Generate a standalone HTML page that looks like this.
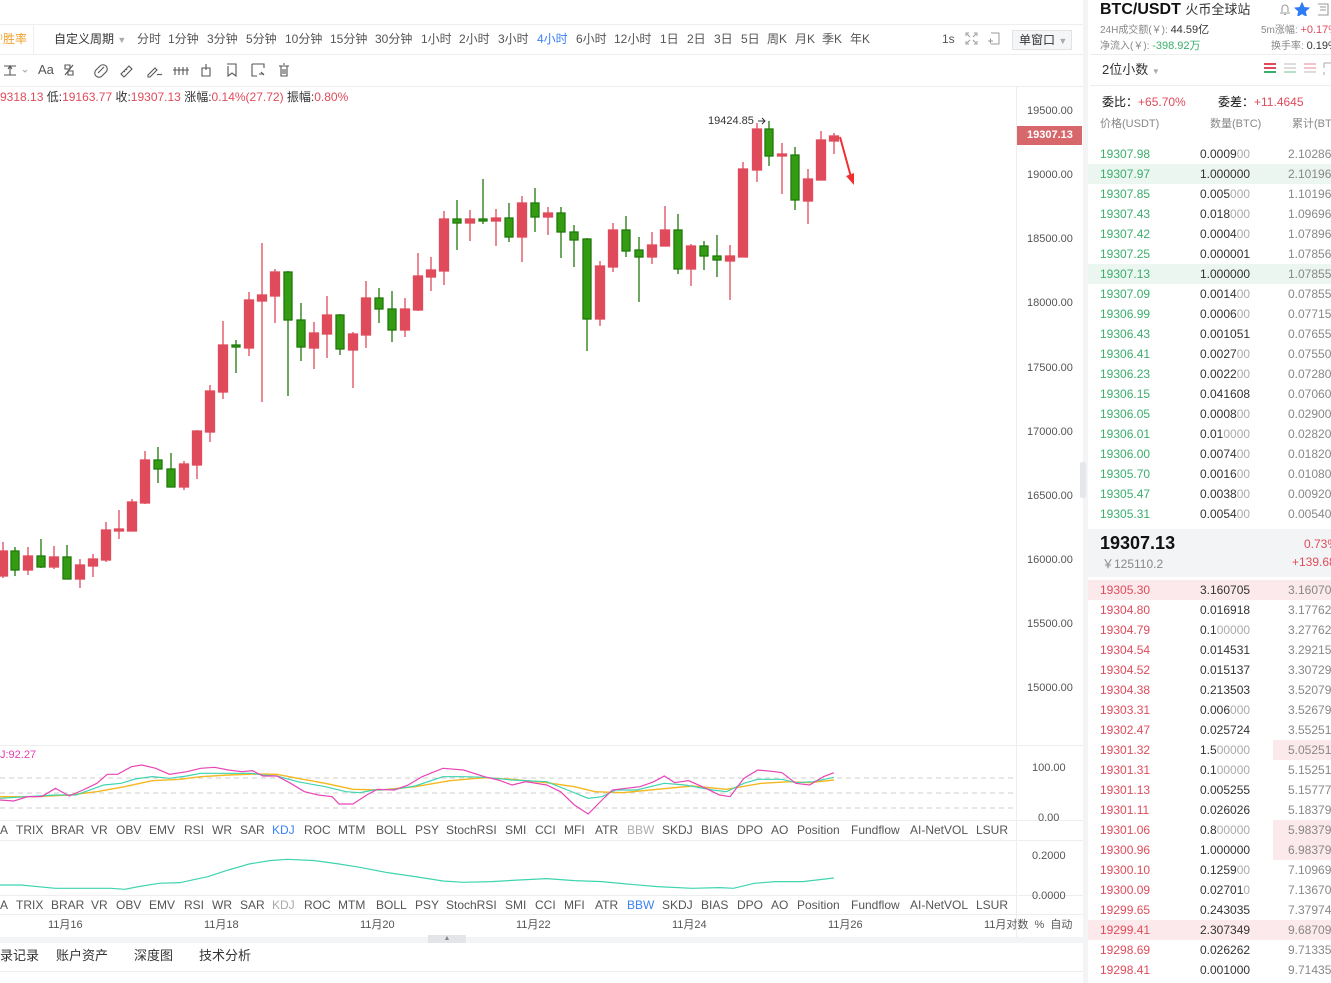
<!DOCTYPE html>
<html><head><meta charset="utf-8">
<style>
*{margin:0;padding:0;box-sizing:border-box}
html,body{width:1331px;height:983px;overflow:hidden}
body{background:#fff;font-family:"Liberation Sans","Noto Sans CJK SC",sans-serif;font-size:12px;color:#333;position:relative}
.a{position:absolute;white-space:nowrap;line-height:14px}
.t{position:absolute;white-space:nowrap;font-size:12px;color:#555;line-height:14px}
.rp{position:absolute;left:1088px;top:0;width:243px;height:983px;background:#fff;overflow:hidden}
.row{position:absolute;left:0;width:243px;height:20px;font-size:12px;line-height:20px}
.row span{position:absolute}
.p{left:12px}.q{left:112px;color:#333}.c{left:200px;color:#888}
.gz{color:#aaa;font-style:normal}
.gr{color:#3aae6c}.rd{color:#e04b5b}
</style></head><body>

<div class="a" style="left:0;top:24px;width:1083px;height:1px;background:#eee"></div>
<div class="a" style="left:0;top:54px;width:1083px;height:1px;background:#eee"></div>
<div class="a" style="left:0;top:86px;width:1083px;height:1px;background:#eee"></div>
<div class="a" style="left:33px;top:25px;width:1px;height:29px;background:#eee"></div>
<div class="a" style="left:0;top:32px;color:#f2a12a;font-size:12px">⁾胜率</div>
<div class="t" style="top:32px;left:54px;color:#333">自定义周期 <span style="color:#aaa;font-size:9px">▼</span></div>
<div class="t" style="top:32px;left:137px">分时</div>
<div class="t" style="top:32px;left:168px">1分钟</div>
<div class="t" style="top:32px;left:207px">3分钟</div>
<div class="t" style="top:32px;left:246px">5分钟</div>
<div class="t" style="top:32px;left:285px">10分钟</div>
<div class="t" style="top:32px;left:330px">15分钟</div>
<div class="t" style="top:32px;left:375px">30分钟</div>
<div class="t" style="top:32px;left:421px">1小时</div>
<div class="t" style="top:32px;left:459px">2小时</div>
<div class="t" style="top:32px;left:498px">3小时</div>
<div class="t" style="top:32px;left:537px;color:#3b82f6">4小时</div>
<div class="t" style="top:32px;left:576px">6小时</div>
<div class="t" style="top:32px;left:614px">12小时</div>
<div class="t" style="top:32px;left:660px">1日</div>
<div class="t" style="top:32px;left:687px">2日</div>
<div class="t" style="top:32px;left:714px">3日</div>
<div class="t" style="top:32px;left:741px">5日</div>
<div class="t" style="top:32px;left:767px">周K</div>
<div class="t" style="top:32px;left:795px">月K</div>
<div class="t" style="top:32px;left:822px">季K</div>
<div class="t" style="top:32px;left:850px">年K</div>
<div class="t" style="top:32px;left:942px">1s</div>
<svg class="a" style="left:965px;top:32px" width="13" height="13" viewBox="0 0 13 13" fill="none" stroke="#999" stroke-width="1"><path d="M1 4V1h3M9 1h3v3M12 9v3H9M4 12H1V9M2 2l3 3M11 2 8 5M11 11 8 8M2 11l3-3"/></svg>
<svg class="a" style="left:987px;top:32px" width="13" height="13" viewBox="0 0 13 13" fill="none" stroke="#999" stroke-width="1"><path d="M4 1h8v11H4M1 9h5M3.5 6.5v5"/></svg>
<div class="a" style="left:1012px;top:30px;width:60px;height:20px;border:1px solid #e3e3e3;background:#f5f6f8;font-size:12px;line-height:18px;padding-left:6px">单窗口 <span style="color:#aaa;font-size:9px">▼</span></div>

<svg class="a" style="left:2px;top:62px" width="300" height="16" viewBox="0 0 300 16" fill="none" stroke="#555" stroke-width="1.1">
<path d="M2 13h12M2 4h12M8 4v9M6 7l2-3 2 3"/><path d="M21 8l2 2 2-2" stroke="#aaa"/>
<path d="M63 3h5v4h-5zM66 9h5v4h-5zM63 13l8-10"/>
<path d="M98 4a4 4 0 0 1 6 6l-4 4a4 4 0 0 1-6-6zM96 11l6-6"/>
<path d="M119 12l8-8 3 3-8 8zM122 9l1 1M124 7l1 1"/>
<path d="M146 13l7-7 2 2-7 7h-2zM155 13c2-2 3 1 5-1"/>
<path d="M173 5v8M177 5v8M181 5v8M185 5v8M171 8h16" />
<path d="M200 6h8v8h-8zM204 2v6"/>
<path d="M225 2h9v12l-4-3-4 3V4"/>
<path d="M250 2h12v4M250 2v12h5M259 10l3 3M257 12h5"/>
<path d="M277 4h10M279 4v10h6V4M281 2h2M281 7v5M283 7v5"/>
</svg>
<div class="a" style="left:38px;top:63px;font-size:13px;color:#555">Aa</div>

<div class="a" style="left:0;top:90px;font-size:12px;color:#333"><span class="rd">9318.13</span> 低:<span class="rd">19163.77</span> 收:<span class="rd">19307.13</span> 涨幅:<span class="rd">0.14%(27.72)</span> 振幅:<span class="rd">0.80%</span></div>

<div class="a" style="left:1016px;top:87px;width:1px;height:850px;background:#eee"></div>
<div class="a" style="left:0;top:745px;width:1083px;height:1px;background:#eee"></div>
<div class="a" style="left:0;top:820px;width:1083px;height:1px;background:#eee"></div>
<div class="a" style="left:0;top:840px;width:1083px;height:1px;background:#eee"></div>
<div class="a" style="left:0;top:895px;width:1083px;height:1px;background:#eee"></div>
<div class="a" style="left:0;top:914px;width:1083px;height:1px;background:#eee"></div>

<div class="a" style="left:1027px;top:104px;font-size:11px;color:#555">19500.00</div>
<div class="a" style="left:1027px;top:168px;font-size:11px;color:#555">19000.00</div>
<div class="a" style="left:1027px;top:232px;font-size:11px;color:#555">18500.00</div>
<div class="a" style="left:1027px;top:296px;font-size:11px;color:#555">18000.00</div>
<div class="a" style="left:1027px;top:361px;font-size:11px;color:#555">17500.00</div>
<div class="a" style="left:1027px;top:425px;font-size:11px;color:#555">17000.00</div>
<div class="a" style="left:1027px;top:489px;font-size:11px;color:#555">16500.00</div>
<div class="a" style="left:1027px;top:553px;font-size:11px;color:#555">16000.00</div>
<div class="a" style="left:1027px;top:617px;font-size:11px;color:#555">15500.00</div>
<div class="a" style="left:1027px;top:681px;font-size:11px;color:#555">15000.00</div>
<div class="a" style="left:1017px;top:126px;width:65px;height:19px;background:#d6686b;color:#fff;font-weight:bold;font-size:11px;line-height:19px;padding-left:10px">19307.13</div>
<div class="a" style="left:1032px;top:761px;font-size:11px;color:#555">100.00</div>
<div class="a" style="left:1038px;top:811px;font-size:11px;color:#555">0.00</div>
<div class="a" style="left:1032px;top:849px;font-size:11px;color:#555">0.2000</div>
<div class="a" style="left:1032px;top:889px;font-size:11px;color:#555">0.0000</div>

<svg class="a" style="left:0;top:0" width="1016" height="745">
<style>.r{fill:#e04b5b;stroke:#e04b5b}.g{fill:#339c12;stroke:#1f7a0a}</style>
<g stroke-width="1.3">
<line class="r" x1="3" x2="3" y1="542" y2="578"/><rect class="r" x="-1.5" y="551" width="9" height="25"/>
<line class="g" x1="15" x2="15" y1="547" y2="576"/><rect class="g" x="11" y="551" width="8" height="19"/>
<line class="r" x1="28" x2="28" y1="547" y2="575"/><rect class="r" x="23.5" y="556" width="9" height="14"/>
<line class="g" x1="41" x2="41" y1="539" y2="568"/><rect class="g" x="37" y="556" width="8" height="11"/>
<line class="r" x1="54" x2="54" y1="546" y2="569"/><rect class="r" x="49.5" y="557" width="9" height="10"/>
<line class="g" x1="67" x2="67" y1="545" y2="579"/><rect class="g" x="63" y="557" width="8" height="22"/>
<line class="r" x1="80" x2="80" y1="559" y2="588"/><rect class="r" x="75.5" y="565" width="9" height="14"/>
<line class="r" x1="93" x2="93" y1="554" y2="577"/><rect class="r" x="88.5" y="559" width="9" height="7"/>
<line class="r" x1="106" x2="106" y1="522" y2="562"/><rect class="r" x="101.5" y="530" width="9" height="30"/>
<line class="r" x1="119" x2="119" y1="510" y2="539"/><rect class="r" x="114.5" y="529" width="9" height="2"/>
<line class="r" x1="132" x2="132" y1="499" y2="531"/><rect class="r" x="127.5" y="502" width="9" height="29"/>
<line class="r" x1="145" x2="145" y1="451" y2="504"/><rect class="r" x="140.5" y="460" width="9" height="43"/>
<line class="g" x1="158" x2="158" y1="447" y2="483"/><rect class="g" x="154" y="460" width="8" height="9"/>
<line class="g" x1="171" x2="171" y1="453" y2="487"/><rect class="g" x="167" y="469" width="8" height="18"/>
<line class="r" x1="184" x2="184" y1="461" y2="490"/><rect class="r" x="179.5" y="464" width="9" height="23"/>
<line class="r" x1="197" x2="197" y1="430" y2="479"/><rect class="r" x="192.5" y="431" width="9" height="34"/>
<line class="r" x1="210" x2="210" y1="385" y2="442"/><rect class="r" x="205.5" y="391" width="9" height="41"/>
<line class="r" x1="223" x2="223" y1="321" y2="399"/><rect class="r" x="218.5" y="345" width="9" height="47"/>
<line class="g" x1="236" x2="236" y1="340" y2="373"/><rect class="g" x="232" y="345" width="8" height="2"/>
<line class="r" x1="249" x2="249" y1="292" y2="356"/><rect class="r" x="244.5" y="300" width="9" height="48"/>
<line class="r" x1="262" x2="262" y1="243" y2="402"/><rect class="r" x="257.5" y="295" width="9" height="6"/>
<line class="r" x1="275" x2="275" y1="269" y2="323"/><rect class="r" x="270.5" y="272" width="9" height="24"/>
<line class="g" x1="288" x2="288" y1="271" y2="396"/><rect class="g" x="284" y="272" width="8" height="48"/>
<line class="g" x1="301" x2="301" y1="303" y2="361"/><rect class="g" x="297" y="320" width="8" height="27"/>
<line class="r" x1="314" x2="314" y1="322" y2="369"/><rect class="r" x="309.5" y="333" width="9" height="15"/>
<line class="r" x1="327" x2="327" y1="296" y2="358"/><rect class="r" x="322.5" y="315" width="9" height="19"/>
<line class="g" x1="340" x2="340" y1="314" y2="355"/><rect class="g" x="336" y="315" width="8" height="34"/>
<line class="r" x1="353" x2="353" y1="332" y2="388"/><rect class="r" x="348.5" y="334" width="9" height="16"/>
<line class="r" x1="366" x2="366" y1="281" y2="348"/><rect class="r" x="361.5" y="298" width="9" height="37"/>
<line class="g" x1="379" x2="379" y1="288" y2="323"/><rect class="g" x="375" y="298" width="8" height="11"/>
<line class="g" x1="392" x2="392" y1="291" y2="342"/><rect class="g" x="388" y="309" width="8" height="21"/>
<line class="r" x1="405" x2="405" y1="298" y2="337"/><rect class="r" x="400.5" y="309" width="9" height="21"/>
<line class="r" x1="418" x2="418" y1="253" y2="311"/><rect class="r" x="413.5" y="276" width="9" height="34"/>
<line class="r" x1="431" x2="431" y1="257" y2="291"/><rect class="r" x="426.5" y="270" width="9" height="7"/>
<line class="r" x1="444" x2="444" y1="211" y2="285"/><rect class="r" x="439.5" y="219" width="9" height="52"/>
<line class="g" x1="457" x2="457" y1="200" y2="250"/><rect class="g" x="453" y="219" width="8" height="4"/>
<line class="r" x1="470" x2="470" y1="210" y2="241"/><rect class="r" x="465.5" y="219" width="9" height="4"/>
<line class="g" x1="483" x2="483" y1="179" y2="224"/><rect class="g" x="479" y="219" width="8" height="2"/>
<line class="r" x1="496" x2="496" y1="209" y2="246"/><rect class="r" x="491.5" y="218" width="9" height="3"/>
<line class="g" x1="509" x2="509" y1="203" y2="242"/><rect class="g" x="505" y="218" width="8" height="19"/>
<line class="r" x1="522" x2="522" y1="196" y2="262"/><rect class="r" x="517.5" y="203" width="9" height="34"/>
<line class="g" x1="535" x2="535" y1="188" y2="232"/><rect class="g" x="531" y="203" width="8" height="14"/>
<line class="r" x1="548" x2="548" y1="207" y2="235"/><rect class="r" x="543.5" y="213" width="9" height="4"/>
<line class="g" x1="561" x2="561" y1="207" y2="258"/><rect class="g" x="557" y="213" width="8" height="19"/>
<line class="g" x1="574" x2="574" y1="225" y2="267"/><rect class="g" x="570" y="232" width="8" height="8"/>
<line class="g" x1="587" x2="587" y1="238" y2="351"/><rect class="g" x="583" y="239" width="8" height="80"/>
<line class="r" x1="600" x2="600" y1="261" y2="326"/><rect class="r" x="595.5" y="266" width="9" height="53"/>
<line class="r" x1="613" x2="613" y1="223" y2="272"/><rect class="r" x="608.5" y="230" width="9" height="37"/>
<line class="g" x1="626" x2="626" y1="216" y2="257"/><rect class="g" x="622" y="230" width="8" height="21"/>
<line class="g" x1="639" x2="639" y1="237" y2="302"/><rect class="g" x="635" y="250" width="8" height="7"/>
<line class="r" x1="652" x2="652" y1="232" y2="264"/><rect class="r" x="647.5" y="245" width="9" height="12"/>
<line class="r" x1="665" x2="665" y1="206" y2="246"/><rect class="r" x="660.5" y="230" width="9" height="16"/>
<line class="g" x1="678" x2="678" y1="214" y2="274"/><rect class="g" x="674" y="230" width="8" height="39"/>
<line class="r" x1="691" x2="691" y1="244" y2="286"/><rect class="r" x="686.5" y="246" width="9" height="23"/>
<line class="g" x1="704" x2="704" y1="241" y2="270"/><rect class="g" x="700" y="246" width="8" height="10"/>
<line class="g" x1="717" x2="717" y1="235" y2="277"/><rect class="g" x="713" y="256" width="8" height="4"/>
<line class="r" x1="730" x2="730" y1="245" y2="300"/><rect class="r" x="725.5" y="256" width="9" height="5"/>
<line class="r" x1="743" x2="743" y1="162" y2="257"/><rect class="r" x="738.5" y="169" width="9" height="88"/>
<line class="r" x1="757" x2="757" y1="123" y2="182"/><rect class="r" x="752.5" y="129" width="9" height="41"/>
<line class="g" x1="769" x2="769" y1="121" y2="166"/><rect class="g" x="765" y="129" width="8" height="27"/>
<line class="r" x1="782" x2="782" y1="143" y2="194"/><rect class="r" x="777.5" y="154" width="9" height="2"/>
<line class="g" x1="795" x2="795" y1="147" y2="210"/><rect class="g" x="791" y="155" width="8" height="45"/>
<line class="r" x1="808" x2="808" y1="169" y2="224"/><rect class="r" x="803.5" y="179" width="9" height="22"/>
<line class="r" x1="821" x2="821" y1="131" y2="180"/><rect class="r" x="816.5" y="140" width="9" height="40"/>
<line class="r" x1="834" x2="834" y1="133" y2="154"/><rect class="r" x="829.5" y="136" width="9" height="5"/>
</g>
<text x="708" y="124" font-size="11" fill="#333" font-family="Liberation Sans">19424.85</text>
<path d="M758 121h7M762 118l3 3-3 3" stroke="#333" fill="none" stroke-width="1"/>
<path d="M840 137l11 40" stroke="#f03030" stroke-width="2"/><path d="M846 176l8 9 0-12z" fill="#f03030"/>
</svg>

<div class="a" style="left:0;top:748px;font-size:11px;color:#e040b0">J:92.27</div>
<svg class="a" style="left:0;top:740px" width="1016" height="170">
<g stroke="#ccc" stroke-dasharray="5,4" stroke-width="1"><line x1="0" x2="1016" y1="38" y2="38"/><line x1="0" x2="1016" y1="53" y2="53"/><line x1="0" x2="1016" y1="68" y2="68"/></g>
<g fill="none" stroke-width="1.3" transform="scale(0.692,0.3333)" vector-effect="non-scaling-stroke">
<polyline vector-effect="non-scaling-stroke" stroke="#f5b820" stroke-width="1.4" points="0,170 50,170 100,165 140,155 180,140 220,122 260,118 290,110 330,105 370,102 400,103 430,115 470,130 510,148 550,150 600,140 650,122 700,113 740,118 790,128 830,140 860,155 900,158 950,148 1000,138 1050,148 1100,130 1140,125 1170,128 1205,120"/>
<polyline vector-effect="non-scaling-stroke" stroke="#3fd4b0" stroke-width="1.2" points="0,175 40,170 80,165 110,165 130,150 150,135 175,130 195,117 220,110 245,115 270,108 290,100 310,100 340,100 365,100 380,105 400,108 430,125 470,140 500,155 520,158 540,150 570,148 600,138 640,110 670,110 700,112 740,120 790,125 820,150 850,175 870,170 890,150 920,150 960,130 990,135 1030,150 1050,155 1075,130 1095,118 1130,118 1150,128 1175,125 1205,112"/>
<polyline vector-effect="non-scaling-stroke" stroke="#e845b8" stroke-width="1.2" points="0,180 20,183 40,170 60,170 80,145 100,168 120,150 140,130 155,103 170,103 190,80 205,75 225,85 245,103 270,95 290,85 310,82 330,90 350,95 365,92 380,108 400,108 420,130 440,155 460,165 480,170 490,192 510,192 530,165 545,148 570,150 590,135 610,110 640,85 670,90 700,110 720,120 740,135 760,125 790,135 810,155 830,195 850,222 870,180 885,150 905,145 925,140 945,125 960,108 975,128 995,122 1015,140 1040,165 1055,170 1075,115 1095,90 1120,95 1130,98 1150,130 1170,135 1190,110 1205,98"/>
<polyline vector-effect="non-scaling-stroke" stroke="#3fd4b0" stroke-width="1.2" points="0,435 30,435 80,445 120,445 160,445 180,448 200,440 230,430 260,428 300,410 330,390 360,372 390,362 415,358 455,362 490,372 520,382 560,398 600,410 640,423 670,427 710,425 750,420 790,416 830,422 870,425 900,431 950,440 1000,445 1040,443 1060,445 1090,430 1120,425 1160,425 1205,414"/>
</g>
</svg>

<div class="t" style="top:823px;left:0">A</div><div class="t" style="top:823px;left:16px">TRIX</div><div class="t" style="top:823px;left:51px">BRAR</div><div class="t" style="top:823px;left:91px">VR</div><div class="t" style="top:823px;left:116px">OBV</div><div class="t" style="top:823px;left:149px">EMV</div><div class="t" style="top:823px;left:184px">RSI</div><div class="t" style="top:823px;left:212px">WR</div><div class="t" style="top:823px;left:240px">SAR</div><div class="t" style="top:823px;left:272px;color:#3b82f6">KDJ</div><div class="t" style="top:823px;left:304px">ROC</div><div class="t" style="top:823px;left:338px">MTM</div><div class="t" style="top:823px;left:376px">BOLL</div><div class="t" style="top:823px;left:415px">PSY</div><div class="t" style="top:823px;left:446px">StochRSI</div><div class="t" style="top:823px;left:505px">SMI</div><div class="t" style="top:823px;left:535px">CCI</div><div class="t" style="top:823px;left:564px">MFI</div><div class="t" style="top:823px;left:595px">ATR</div><div class="t" style="top:823px;left:627px;color:#aaa">BBW</div><div class="t" style="top:823px;left:662px">SKDJ</div><div class="t" style="top:823px;left:701px">BIAS</div><div class="t" style="top:823px;left:737px">DPO</div><div class="t" style="top:823px;left:771px">AO</div><div class="t" style="top:823px;left:797px">Position</div><div class="t" style="top:823px;left:851px">Fundflow</div><div class="t" style="top:823px;left:910px">AI-NetVOL</div><div class="t" style="top:823px;left:976px">LSUR</div>

<div class="t" style="top:898px;left:0">A</div><div class="t" style="top:898px;left:16px">TRIX</div><div class="t" style="top:898px;left:51px">BRAR</div><div class="t" style="top:898px;left:91px">VR</div><div class="t" style="top:898px;left:116px">OBV</div><div class="t" style="top:898px;left:149px">EMV</div><div class="t" style="top:898px;left:184px">RSI</div><div class="t" style="top:898px;left:212px">WR</div><div class="t" style="top:898px;left:240px">SAR</div><div class="t" style="top:898px;left:272px;color:#aaa">KDJ</div><div class="t" style="top:898px;left:304px">ROC</div><div class="t" style="top:898px;left:338px">MTM</div><div class="t" style="top:898px;left:376px">BOLL</div><div class="t" style="top:898px;left:415px">PSY</div><div class="t" style="top:898px;left:446px">StochRSI</div><div class="t" style="top:898px;left:505px">SMI</div><div class="t" style="top:898px;left:535px">CCI</div><div class="t" style="top:898px;left:564px">MFI</div><div class="t" style="top:898px;left:595px">ATR</div><div class="t" style="top:898px;left:627px;color:#3b82f6">BBW</div><div class="t" style="top:898px;left:662px">SKDJ</div><div class="t" style="top:898px;left:701px">BIAS</div><div class="t" style="top:898px;left:737px">DPO</div><div class="t" style="top:898px;left:771px">AO</div><div class="t" style="top:898px;left:797px">Position</div><div class="t" style="top:898px;left:851px">Fundflow</div><div class="t" style="top:898px;left:910px">AI-NetVOL</div><div class="t" style="top:898px;left:976px">LSUR</div>

<div class="t" style="top:918px;left:48px;font-size:11px">11月16</div>
<div class="t" style="top:918px;left:204px;font-size:11px">11月18</div>
<div class="t" style="top:918px;left:360px;font-size:11px">11月20</div>
<div class="t" style="top:918px;left:516px;font-size:11px">11月22</div>
<div class="t" style="top:918px;left:672px;font-size:11px">11月24</div>
<div class="t" style="top:918px;left:828px;font-size:11px">11月26</div>
<div class="t" style="top:918px;left:984px;font-size:11px">11月对数 &nbsp;% &nbsp;自动</div>

<div class="a" style="left:0;top:937px;width:1083px;height:6px;background:#f3f4f6"></div>
<div class="a" style="left:428px;top:935px;width:38px;height:8px;background:#e3e5e8;font-size:7px;color:#888;text-align:center;line-height:8px">▲</div>
<div class="t" style="top:949px;left:0;color:#333;font-size:13px">录记录</div>
<div class="t" style="top:949px;left:56px;color:#333;font-size:13px">账户资产</div>
<div class="t" style="top:949px;left:134px;color:#333;font-size:13px">深度图</div>
<div class="t" style="top:949px;left:199px;color:#333;font-size:13px">技术分析</div>
<div class="a" style="left:0;top:971px;width:1083px;height:1px;background:#eee"></div>

<div class="a" style="left:1083px;top:0;width:5px;height:983px;background:#f3f4f6"></div>
<div class="a" style="left:1080px;top:462px;width:6px;height:36px;background:#e5e7ea;border-radius:2px"></div>

<div class="rp">
<div class="a" style="left:12px;top:1px;font-size:16px;font-weight:bold;color:#111;line-height:18px">BTC/USDT <span style="font-weight:normal;font-size:13px;color:#333">火币全球站</span></div>
<svg class="a" style="left:189px;top:2px" width="54" height="14" fill="none" stroke="#999" stroke-width="1.1"><path d="M3 11h10M5 10V6a3 3 0 0 1 6 0v4M7 12.5h2"/><path d="M25 1l2 4.5 4.8.5-3.6 3.2 1 4.8L25 11.5 20.8 14l1-4.8L18.2 6l4.8-.5z" fill="#2f7cf6" stroke="#2f7cf6"/><path d="M41 2h10v11H41M43 5h6M43 8h6"/></svg>
<div class="a" style="left:12px;top:23px;font-size:10px;color:#888">24H成交额(￥): <span style="color:#333;font-size:11px">44.59亿</span></div>
<div class="a" style="left:12px;top:39px;font-size:10px;color:#888">净流入(￥): <span style="color:#3aae6c;font-size:11px">-398.92万</span></div>
<div class="a" style="left:173px;top:23px;font-size:10px;color:#888">5m涨幅: <span class="rd" style="font-size:11px">+0.17%</span></div>
<div class="a" style="left:183px;top:39px;font-size:10px;color:#888">换手率: <span style="color:#333;font-size:11px">0.19%</span></div>
<div class="a" style="left:2px;top:54px;width:241px;height:1px;background:#eee"></div>
<div class="a" style="left:14px;top:63px;font-size:13px;color:#333">2位小数 <span style="color:#aaa;font-size:8px">▼</span></div>
<svg class="a" style="left:174px;top:62px" width="69" height="14"><g stroke-width="2"><path d="M2 2h12M2 6h12" stroke="#e04b5b"/><path d="M2 10h12" stroke="#3aae6c"/><path d="M22 2h12M22 6h12" stroke="#ddd"/><path d="M22 10h12" stroke="#b8e0c8"/><path d="M42 2h12M42 6h12" stroke="#f3c3c8"/><path d="M42 10h12" stroke="#ddd"/></g><path d="M62 1h7M62 1v5M62 10v3" stroke="#aaa"/></svg>
<div class="a" style="left:2px;top:85px;width:241px;height:1px;background:#eee"></div>
<div class="a" style="left:14px;top:95px;font-size:12px;color:#111">委比：<span class="rd">+65.70%</span></div>
<div class="a" style="left:130px;top:95px;font-size:12px;color:#111">委差：<span class="rd">+11.4645</span></div>
<div class="a" style="left:12px;top:117px;font-size:11px;color:#888">价格(USDT)</div>
<div class="a" style="left:122px;top:117px;font-size:11px;color:#888">数量(BTC)</div>
<div class="a" style="left:204px;top:117px;font-size:11px;color:#888">累计(BTC)</div>

<div class="row" style="top:144px"><span class="p gr">19307.98</span><span class="q">0.0009<i class="gz">00</i></span><span class="c">2.10286</span></div>
<div class="row" style="top:164px;background:#eaf6ef"><span class="p gr">19307.97</span><span class="q">1.000000</span><span class="c">2.10196</span></div>
<div class="row" style="top:184px"><span class="p gr">19307.85</span><span class="q">0.005<i class="gz">000</i></span><span class="c">1.10196</span></div>
<div class="row" style="top:204px"><span class="p gr">19307.43</span><span class="q">0.018<i class="gz">000</i></span><span class="c">1.09696</span></div>
<div class="row" style="top:224px"><span class="p gr">19307.42</span><span class="q">0.0004<i class="gz">00</i></span><span class="c">1.07896</span></div>
<div class="row" style="top:244px"><span class="p gr">19307.25</span><span class="q">0.000001</span><span class="c">1.07856</span></div>
<div class="row" style="top:264px;background:#eaf6ef"><span class="p gr">19307.13</span><span class="q">1.000000</span><span class="c">1.07855</span></div>
<div class="row" style="top:284px"><span class="p gr">19307.09</span><span class="q">0.0014<i class="gz">00</i></span><span class="c">0.07855</span></div>
<div class="row" style="top:304px"><span class="p gr">19306.99</span><span class="q">0.0006<i class="gz">00</i></span><span class="c">0.07715</span></div>
<div class="row" style="top:324px"><span class="p gr">19306.43</span><span class="q">0.001051</span><span class="c">0.07655</span></div>
<div class="row" style="top:344px"><span class="p gr">19306.41</span><span class="q">0.0027<i class="gz">00</i></span><span class="c">0.07550</span></div>
<div class="row" style="top:364px"><span class="p gr">19306.23</span><span class="q">0.0022<i class="gz">00</i></span><span class="c">0.07280</span></div>
<div class="row" style="top:384px"><span class="p gr">19306.15</span><span class="q">0.041608</span><span class="c">0.07060</span></div>
<div class="row" style="top:404px"><span class="p gr">19306.05</span><span class="q">0.0008<i class="gz">00</i></span><span class="c">0.02900</span></div>
<div class="row" style="top:424px"><span class="p gr">19306.01</span><span class="q">0.01<i class="gz">0000</i></span><span class="c">0.02820</span></div>
<div class="row" style="top:444px"><span class="p gr">19306.00</span><span class="q">0.0074<i class="gz">00</i></span><span class="c">0.01820</span></div>
<div class="row" style="top:464px"><span class="p gr">19305.70</span><span class="q">0.0016<i class="gz">00</i></span><span class="c">0.01080</span></div>
<div class="row" style="top:484px"><span class="p gr">19305.47</span><span class="q">0.0038<i class="gz">00</i></span><span class="c">0.00920</span></div>
<div class="row" style="top:504px"><span class="p gr">19305.31</span><span class="q">0.0054<i class="gz">00</i></span><span class="c">0.00540</span></div>

<div class="a" style="left:0;top:529px;width:243px;height:48px;background:#f3f4f6"></div>
<div class="a" style="left:12px;top:533px;font-size:18px;font-weight:bold;color:#111;line-height:20px">19307.13</div>
<div class="a" style="left:14px;top:557px;font-size:12px;color:#888">￥125110.2</div>
<div class="a" style="left:216px;top:537px;font-size:12px"><span class="rd">0.73%</span></div>
<div class="a" style="left:204px;top:555px;font-size:12px"><span class="rd">+139.68</span></div>

<div class="a" style="left:185px;top:740px;width:58px;height:20px;background:#fbe9eb"></div>
<div class="a" style="left:185px;top:820px;width:58px;height:40px;background:#fbe9eb"></div>
<div class="row" style="top:580px;background:#fbe9eb"><span class="p rd">19305.30</span><span class="q">3.160705</span><span class="c">3.16070</span></div>
<div class="row" style="top:600px"><span class="p rd">19304.80</span><span class="q">0.016918</span><span class="c">3.17762</span></div>
<div class="row" style="top:620px"><span class="p rd">19304.79</span><span class="q">0.1<i class="gz">00000</i></span><span class="c">3.27762</span></div>
<div class="row" style="top:640px"><span class="p rd">19304.54</span><span class="q">0.014531</span><span class="c">3.29215</span></div>
<div class="row" style="top:660px"><span class="p rd">19304.52</span><span class="q">0.015137</span><span class="c">3.30729</span></div>
<div class="row" style="top:680px"><span class="p rd">19304.38</span><span class="q">0.213503</span><span class="c">3.52079</span></div>
<div class="row" style="top:700px"><span class="p rd">19303.31</span><span class="q">0.006<i class="gz">000</i></span><span class="c">3.52679</span></div>
<div class="row" style="top:720px"><span class="p rd">19302.47</span><span class="q">0.025724</span><span class="c">3.55251</span></div>
<div class="row" style="top:740px"><span class="p rd">19301.32</span><span class="q">1.5<i class="gz">00000</i></span><span class="c">5.05251</span></div>
<div class="row" style="top:760px"><span class="p rd">19301.31</span><span class="q">0.1<i class="gz">00000</i></span><span class="c">5.15251</span></div>
<div class="row" style="top:780px"><span class="p rd">19301.13</span><span class="q">0.005255</span><span class="c">5.15777</span></div>
<div class="row" style="top:800px"><span class="p rd">19301.11</span><span class="q">0.026026</span><span class="c">5.18379</span></div>
<div class="row" style="top:820px"><span class="p rd">19301.06</span><span class="q">0.8<i class="gz">00000</i></span><span class="c">5.98379</span></div>
<div class="row" style="top:840px"><span class="p rd">19300.96</span><span class="q">1.000000</span><span class="c">6.98379</span></div>
<div class="row" style="top:860px"><span class="p rd">19300.10</span><span class="q">0.1259<i class="gz">00</i></span><span class="c">7.10969</span></div>
<div class="row" style="top:880px"><span class="p rd">19300.09</span><span class="q">0.02701<i class="gz">0</i></span><span class="c">7.13670</span></div>
<div class="row" style="top:900px"><span class="p rd">19299.65</span><span class="q">0.243035</span><span class="c">7.37974</span></div>
<div class="row" style="top:920px;background:#fbe9eb"><span class="p rd">19299.41</span><span class="q">2.307349</span><span class="c">9.68709</span></div>
<div class="row" style="top:940px"><span class="p rd">19298.69</span><span class="q">0.026262</span><span class="c">9.71335</span></div>
<div class="row" style="top:960px"><span class="p rd">19298.41</span><span class="q">0.001000</span><span class="c">9.71435</span></div>
</div>
</body></html>
